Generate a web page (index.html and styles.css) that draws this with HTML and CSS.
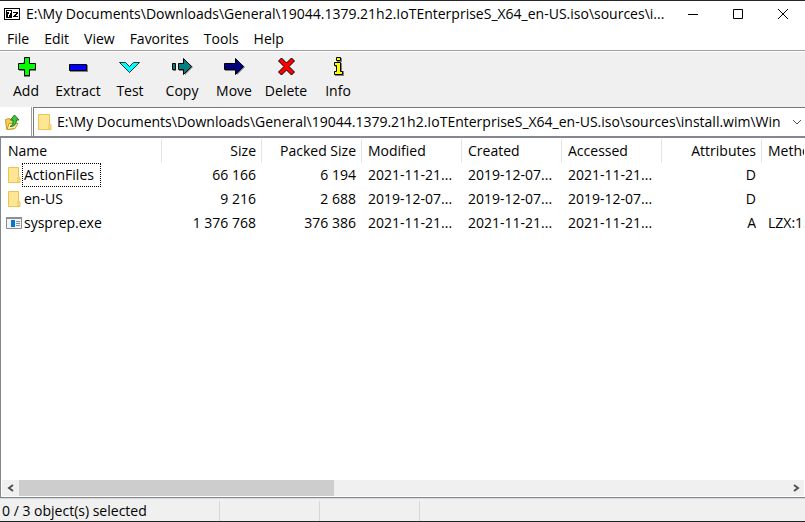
FILE: index.html
```html
<!DOCTYPE html>
<html lang="en">
<head>
    <meta charset="UTF-8">
    <meta name="viewport" content="width=device-width, initial-scale=1.0">
    <title>7-Zip File Manager</title>
    <link rel="stylesheet" href="styles.css">
</head>
<body>
    <header class="titlebar">
        <svg class="app-icon" width="16" height="12" viewBox="0 0 16 12" shape-rendering="crispEdges">
            <path d="M0 0h16v12H0z"/>
            <path d="M1 1h14v10H1z" fill="#fff"/>
            <path d="M2 2h6v8H2z"/>
            <path d="M3 3h4v2H6v2H5v2H4V6h1V4H3z" fill="#fff"/>
            <path d="M9 4h5v2h-1v1h-1v1h2v1H9V8h1V7h1V6h1V5H9z"/>
        </svg>
        <h1 class="title">E:\My Documents\Downloads\General\19044.1379.21h2.IoTEnterpriseS_X64_en-US.iso\sources\i...</h1>
        <div class="window-buttons">
            <button class="window-btn" aria-label="Minimize"><svg width="10" height="10"><path d="M0 5.500h10"/></svg></button>
            <button class="window-btn" aria-label="Maximize"><svg width="10" height="10"><path d="M.5.5h9v9h-9z"/></svg></button>
            <button class="window-btn" aria-label="Close"><svg width="10" height="10"><path d="M0 0l10 10M10 0L0 10"/></svg></button>
        </div>
    </header>

    <nav class="menubar">
        <button class="menu-btn">File</button>
        <button class="menu-btn">Edit</button>
        <button class="menu-btn">View</button>
        <button class="menu-btn">Favorites</button>
        <button class="menu-btn">Tools</button>
        <button class="menu-btn">Help</button>
    </nav>

    <div class="toolbar">
        <button class="tool-btn">
            <svg width="24" height="24" viewBox="0 0 24 24"><path class="shade" d="M11 4h5v6h6v6h-6v6h-6v-6H5z"/><path d="M10.500 2.500h5v6h6v6h-6v6h-5v-6h-6v-6h6z" fill="#0f0" stroke="#000"/></svg>
            Add
        </button>
        <button class="tool-btn">
            <svg width="24" height="24" viewBox="0 0 24 24"><path class="shade" d="M4 10h18v7H4z"/><path d="M3.500 9.500h17v6h-17z" fill="#00f" stroke="#000"/></svg>
            Extract
        </button>
        <button class="tool-btn">
            <svg width="24" height="24" viewBox="0 0 24 24"><path d="M1.500 7.500h6l4 4 4-4h6l-10 10z" fill="#0ff" stroke="#000" stroke-width=".8"/></svg>
            Test
        </button>
        <button class="tool-btn">
            <svg width="24" height="24" viewBox="0 0 24 24"><path class="shade" d="M3 10h3v6H3zM9 10h6V5l8 7-8 8v-4H9z"/><path d="M2.500 8.500h3v6h-3zM8.500 8.500h5v-5l8 8-8 8v-5h-5z" fill="#008080" stroke="#000"/></svg>
            Copy
        </button>
        <button class="tool-btn">
            <svg width="24" height="24" viewBox="0 0 24 24"><path class="shade" d="M3 10h12V5l8 7-8 8v-4H3z"/><path d="M2.500 8.500h11v-5l8 8-8 8v-5h-11z" fill="navy" stroke="#000"/></svg>
            Move
        </button>
        <button class="tool-btn">
            <svg width="24" height="24" viewBox="0 0 24 24"><path d="M4.500 6L7.500 3l5 5 5-5 3 3-5.500 5.500 5.500 5.500-3 3-5-5-5 5-3-3 5.500-5.500z" fill="red" stroke="#000"/></svg>
            Delete
        </button>
        <button class="tool-btn">
            <svg width="24" height="24" viewBox="0 0 24 24"><path class="shade" d="M11 3h5v4h-5zM9 8h7v8h2v5H9v-4h2v-5H9z"/><path d="M10.500 2.500h4v3h-4zM8.500 7.500h6v9h2v3h-8v-3h2v-6h-2z" fill="#ff0" stroke="#000"/></svg>
            Info
        </button>
    </div>

    <div class="addressbar">
        <button class="up-btn" aria-label="Up one level">
            <svg width="16" height="16" viewBox="0 0 16 16">
                <path d="M.5 5.500l4-1 1 1.500h5v3l-2 6h-7z" fill="#f3cf57" stroke="#c79a2b"/>
                <path d="M4 9.500h9l-3 5-8 1z" fill="#fff0a0" stroke="#c79a2b"/>
                <path d="M5 12.500c3-1 3-3 3-6.500H5.500l4-5 4.500 5h-2.500c0 4-2 6.500-6.500 6.500z" fill="#3fc43a" stroke="#1a7a1e"/>
            </svg>
        </button>
        <div class="path-box">
            <svg width="14" height="16" viewBox="0 0 14 16"><path d="M.5.5h11V10l1.500 1v4.500H.5z" fill="#ffe594" stroke="#e9c451"/><path d="M11 10v5" stroke="#e9c451"/></svg>
            <input class="path-input" type="text" aria-label="Path" value="E:\My Documents\Downloads\General\19044.1379.21h2.IoTEnterpriseS_X64_en-US.iso\sources\install.wim\Win">
            <button class="drop-btn" aria-label="Show folders"><svg width="10" height="6"><path d="M1 1l4 4 4-4"/></svg></button>
        </div>
    </div>

    <main class="panel">
        <div class="list">
            <table class="files">
                <colgroup>
                    <col class="col-name">
                    <col span="7">
                </colgroup>
                <thead>
                    <tr><th>Name</th><th class="right">Size</th><th class="right">Packed Size</th><th>Modified</th><th>Created</th><th>Accessed</th><th class="right">Attributes</th><th>Method</th></tr>
                </thead>
                <tbody>
                    <tr>
                        <td><div class="file"><svg width="16" height="16" viewBox="0 0 16 16"><path d="M2.500.5h10V10l1.500 1v4.500H2.500z" fill="#ffe594" stroke="#e9c451"/><path d="M12 10v5" stroke="#e9c451"/></svg><span class="file-name focused">ActionFiles</span></div></td>
                        <td class="right">66 166</td><td class="right">6 194</td><td>2021-11-21...</td><td>2019-12-07...</td><td>2021-11-21...</td><td class="right">D</td><td></td>
                    </tr>
                    <tr>
                        <td><div class="file"><svg width="16" height="16" viewBox="0 0 16 16"><path d="M2.500.5h10V10l1.500 1v4.500H2.500z" fill="#ffe594" stroke="#e9c451"/><path d="M12 10v5" stroke="#e9c451"/></svg><span class="file-name">en-US</span></div></td>
                        <td class="right">9 216</td><td class="right">2 688</td><td>2019-12-07...</td><td>2019-12-07...</td><td>2019-12-07...</td><td class="right">D</td><td></td>
                    </tr>
                    <tr>
                        <td><div class="file"><svg width="16" height="16" viewBox="0 0 16 16"><path d="M.5 2.500h15v11H.5z" fill="#f4f4f4" stroke="#8a9094"/><path d="M0 2h16v2H0z" fill="#8a9094"/><path d="M5 5h4v7H5z" fill="#0078d7"/><path d="M10 6.500h4M10 8.500h4M10 10.500h4" stroke="#8a9094"/></svg><span class="file-name">sysprep.exe</span></div></td>
                        <td class="right">1 376 768</td><td class="right">376 386</td><td>2021-11-21...</td><td>2021-11-21...</td><td>2021-11-21...</td><td class="right">A</td><td>LZX:15</td>
                    </tr>
                </tbody>
            </table>
        </div>
        <div class="scrollbar">
            <button class="scroll-btn" aria-label="Scroll left"><svg width="8" height="8"><path d="M6 1L2 4l4 3"/></svg></button>
            <div class="track"><div class="thumb"></div></div>
            <button class="scroll-btn" aria-label="Scroll right"><svg width="8" height="8"><path d="M2 1l4 3-4 3"/></svg></button>
        </div>
    </main>

    <footer class="statusbar">
        <span class="status">0 / 3 object(s) selected</span>
        <span class="status small"></span>
        <span class="status small"></span>
    </footer>
</body>
</html>
```

FILE: styles.css
```css
* {
    box-sizing: border-box;
}

body {
    margin: 0;
    height: 100vh;
    display: flex;
    flex-direction: column;
    overflow: hidden;
    background: #f0f0f0;
    border-top: 1px solid #2b2629;
    border-bottom: 1px solid #222;
    color: #000;
    font-family: "Open Sans", "Noto Sans", sans-serif;
    font-size: 14px;
    line-height: 20px;
}

button {
    margin: 0;
    padding: 0;
    border: none;
    background: none;
    color: inherit;
    font: inherit;
}

svg {
    display: block;
    flex: none;
}

.titlebar {
    display: flex;
    align-items: center;
    height: 26px;
    padding-left: 4px;
    background: #fff;
}

.title {
    flex: 1;
    min-width: 0;
    margin: 0 0 0 6px;
    overflow: hidden;
    white-space: nowrap;
    font-size: 14px;
    font-weight: normal;
}

.window-buttons {
    display: flex;
    flex: none;
}

.window-btn {
    display: flex;
    align-items: center;
    justify-content: center;
    width: 45px;
    height: 26px;
}

.window-btn svg {
    fill: none;
    stroke: #000;
}

.menubar {
    display: flex;
    height: 23px;
    background: #fff;
}

.menu-btn {
    padding: 0 8px 0 7px;
}

.toolbar {
    display: flex;
    height: 57px;
    border-top: 1px solid #a0a0a0;
    box-shadow: inset 0 1px #fff;
}

.tool-btn {
    display: flex;
    flex-direction: column;
    align-items: center;
    width: 52px;
    padding-top: 4px;
    gap: 2px;
}

.shade {
    fill: #808080;
}

.addressbar {
    display: flex;
    height: 29px;
    background: #fff;
}

.up-btn {
    width: 32px;
    padding-left: 5px;
    border-right: 1px solid #a0a0a0;
}

.path-box {
    display: flex;
    align-items: center;
    flex: 1;
    min-width: 0;
    margin-left: 1px;
    padding-left: 4px;
    border: 1px solid #7a7a7a;
    border-width: 1px 0 0 1px;
}

.path-input {
    flex: 1;
    min-width: 0;
    padding: 0 0 0 5px;
    border: none;
    outline: none;
    background: none;
    color: inherit;
    font: inherit;
}

.drop-btn {
    display: flex;
    justify-content: center;
    width: 17px;
}

.drop-btn svg {
    fill: none;
    stroke: #555;
}

.panel {
    display: flex;
    flex-direction: column;
    flex: 1;
    min-height: 0;
    padding: 1px;
    background: #fff;
    border: 1px solid #828790;
    border-right: none;
    border-top-width: 2px;
}

.list {
    flex: 1;
    min-height: 0;
    overflow: hidden;
}

.files {
    width: 860px;
    table-layout: fixed;
    border-collapse: collapse;
}

.col-name {
    width: 160px;
}

.files th,
.files td {
    height: 24px;
    padding: 0 6px;
    text-align: left;
    font-weight: normal;
    white-space: nowrap;
}

.files th {
    box-shadow: inset -1px 0 #e5e5e5;
}

.files .right {
    text-align: right;
}

.files td:first-child {
    padding-left: 4px;
}

.file {
    display: flex;
    align-items: center;
}

.file-name {
    padding: 1px;
    border: 1px dotted transparent;
}

.focused {
    padding-right: 6px;
    border-color: #000;
}

.scrollbar {
    display: flex;
    height: 16px;
    background: #f0f0f0;
}

.scroll-btn {
    display: flex;
    align-items: center;
    justify-content: center;
    width: 17px;
}

.scroll-btn svg {
    fill: none;
    stroke: #505050;
    stroke-width: 2;
}

.track {
    flex: 1;
}

.thumb {
    width: 41%;
    height: 100%;
    background: #cdcdcd;
}

.statusbar {
    display: flex;
    height: 23px;
    padding-top: 2px;
    border-top: 1px solid #d7d7d7;
}

.status {
    width: 220px;
    padding-left: 2px;
    border-right: 1px solid #d7d7d7;
}

.small {
    width: 100px;
}
```
